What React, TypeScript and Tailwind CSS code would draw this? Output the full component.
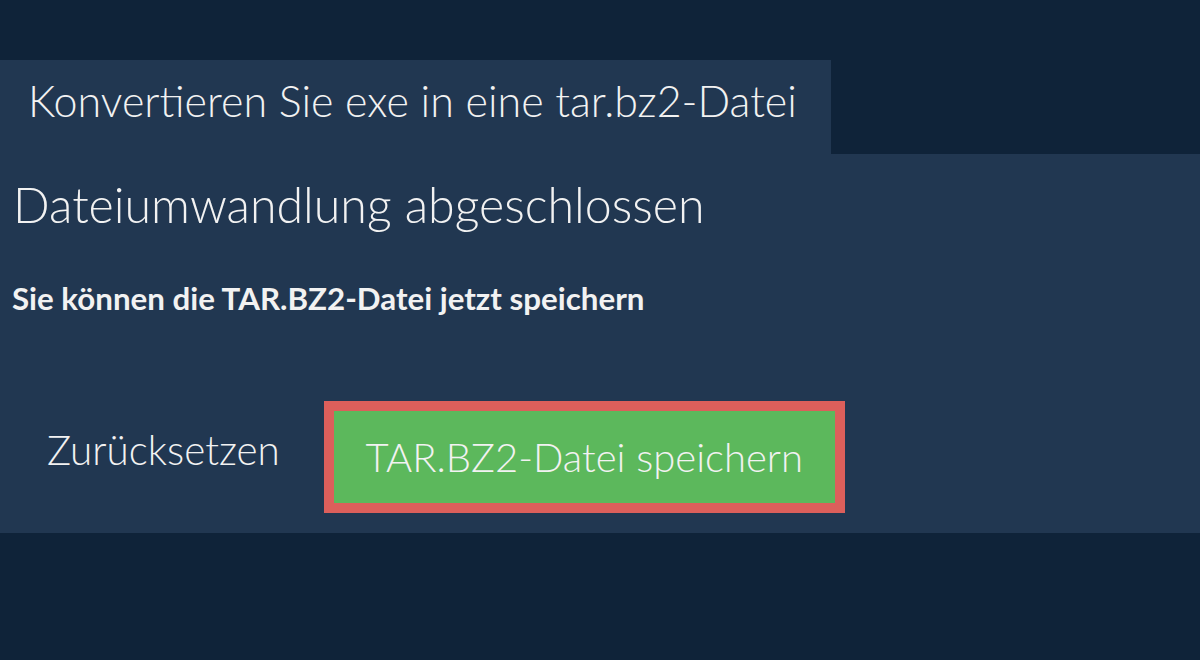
export default function App() {
  return (
    <div className="w-[1200px] h-[660px] bg-[#0f2339] pt-[60px] font-['Lato',sans-serif] text-[#f2f2f2]">
      <div className="w-[831px] h-[94px] bg-[#213751] pl-[28px] pt-[19px]">
        <div className="text-[43px] font-light leading-none">Konvertieren Sie exe in eine tar.bz2-Datei</div>
      </div>
      <div className="h-[379px] bg-[#213751] flex flex-col">
        <h1 className="pl-[13px] mt-[26px] text-[48.3px] font-light leading-none">Dateiumwandlung abgeschlossen</h1>
        <p className="pl-[12px] mt-[55px] text-[31.3px] font-bold leading-none">Sie können die TAR.BZ2-Datei jetzt speichern</p>
        <div className="flex items-start mt-[86px] pl-[47px]">
          <span className="mt-[29px] text-[40.4px] font-light leading-none">Zurücksetzen</span>
          <div className="ml-[44px] border-[10px] border-[#dc5f5b]">
            <div className="w-[501px] h-[92px] bg-[#5cb85c] flex items-center justify-center">
              <span className="text-[40px] font-light leading-none">TAR.BZ2-Datei speichern</span>
            </div>
          </div>
        </div>
      </div>
    </div>
  );
}
